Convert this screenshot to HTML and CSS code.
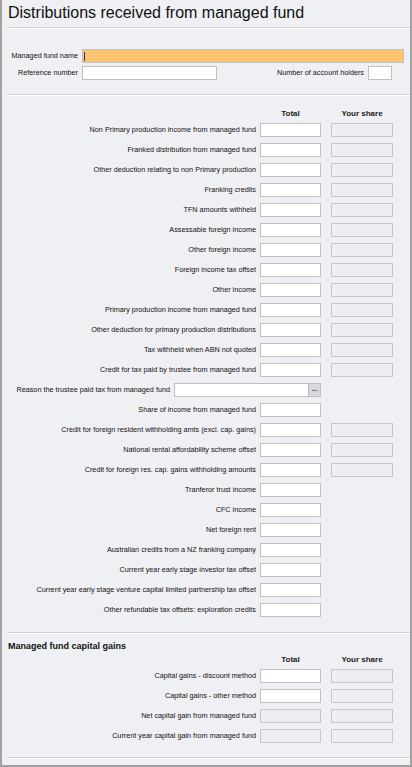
FILE: index.html
```html
<!DOCTYPE html>
<html>
<head>
<meta charset="utf-8">
<link rel="stylesheet" href="styles.css">
</head>
<body>
<div class="window">
  <h1 class="title">Distributions received from managed fund</h1>
  <div class="sep sep-title"></div>

  <div class="fund">
    <div class="fund-row">
      <span class="fund-label">Managed fund name</span>
      <div class="field field-name"><span class="caret"></span></div>
    </div>
    <div class="fund-row">
      <span class="fund-label">Reference number</span>
      <div class="field field-ref"></div>
      <span class="spacer"></span>
      <span class="holders-label">Number of account holders</span>
      <div class="field field-holders"></div>
    </div>
  </div>

  <div class="sep sep-fund"></div>

  <div class="heads heads-main">
    <span class="head-spacer"></span>
    <span class="col-head col-total">Total</span>
    <span class="col-head col-share">Your share</span>
  </div>

  <div class="rows">
    <div class="row"><span class="lbl">Non Primary production income from managed fund</span><div class="field total"></div><div class="field share"></div></div>
    <div class="row"><span class="lbl">Franked distribution from managed fund</span><div class="field total"></div><div class="field share"></div></div>
    <div class="row"><span class="lbl">Other deduction relating to non Primary production</span><div class="field total"></div><div class="field share"></div></div>
    <div class="row"><span class="lbl">Franking credits</span><div class="field total"></div><div class="field share"></div></div>
    <div class="row"><span class="lbl">TFN amounts withheld</span><div class="field total"></div><div class="field share"></div></div>
    <div class="row"><span class="lbl">Assessable foreign income</span><div class="field total"></div><div class="field share"></div></div>
    <div class="row"><span class="lbl">Other foreign income</span><div class="field total"></div><div class="field share"></div></div>
    <div class="row"><span class="lbl">Foreign income tax offset</span><div class="field total"></div><div class="field share"></div></div>
    <div class="row"><span class="lbl">Other income</span><div class="field total"></div><div class="field share"></div></div>
    <div class="row"><span class="lbl">Primary production income from managed fund</span><div class="field total"></div><div class="field share"></div></div>
    <div class="row"><span class="lbl">Other deduction for primary production distributions</span><div class="field total"></div><div class="field share"></div></div>
    <div class="row"><span class="lbl">Tax withheld when ABN not quoted</span><div class="field total"></div><div class="field share"></div></div>
    <div class="row"><span class="lbl">Credit for tax paid by trustee from managed fund</span><div class="field total"></div><div class="field share"></div></div>
    <div class="row"><span class="lbl">Reason the trustee paid tax from managed fund</span><div class="field combo"><span class="combo-btn">...</span></div><span class="share-blank"></span></div>
    <div class="row"><span class="lbl">Share of income from managed fund</span><div class="field total"></div><span class="share-blank"></span></div>
    <div class="row"><span class="lbl">Credit for foreign resident withholding amts (excl. cap. gains)</span><div class="field total"></div><div class="field share"></div></div>
    <div class="row"><span class="lbl">National rental affordability scheme offset</span><div class="field total"></div><div class="field share"></div></div>
    <div class="row"><span class="lbl">Credit for foreign res. cap. gains withholding amounts</span><div class="field total"></div><div class="field share"></div></div>
    <div class="row"><span class="lbl">Tranferor trust income</span><div class="field total"></div><span class="share-blank"></span></div>
    <div class="row"><span class="lbl">CFC income</span><div class="field total"></div><span class="share-blank"></span></div>
    <div class="row"><span class="lbl">Net foreign rent</span><div class="field total"></div><span class="share-blank"></span></div>
    <div class="row"><span class="lbl">Australian credits from a NZ franking company</span><div class="field total"></div><span class="share-blank"></span></div>
    <div class="row"><span class="lbl">Current year early stage investor tax offset</span><div class="field total"></div><span class="share-blank"></span></div>
    <div class="row"><span class="lbl">Current year early stage venture capital limited partnership tax offset</span><div class="field total"></div><span class="share-blank"></span></div>
    <div class="row"><span class="lbl">Other refundable tax offsets: exploration credits</span><div class="field total"></div><span class="share-blank"></span></div>
  </div>

  <div class="sep sep-rows"></div>

  <h2 class="section-title">Managed fund capital gains</h2>

  <div class="heads heads-cg">
    <span class="head-spacer"></span>
    <span class="col-head col-total">Total</span>
    <span class="col-head col-share">Your share</span>
  </div>

  <div class="rows">
    <div class="row"><span class="lbl">Capital gains - discount method</span><div class="field total"></div><div class="field share"></div></div>
    <div class="row"><span class="lbl">Capital gains - other method</span><div class="field total"></div><div class="field share"></div></div>
    <div class="row"><span class="lbl">Net capital gain from managed fund</span><div class="field total disabled"></div><div class="field share"></div></div>
    <div class="row"><span class="lbl">Current year capital gain from managed fund</span><div class="field total disabled"></div><div class="field share"></div></div>
  </div>

  <div class="sep sep-end"></div>
</div>
</body>
</html>
```

FILE: styles.css
```css
* {
  box-sizing: border-box;
}

html, body {
  margin: 0;
  padding: 0;
  background: #eff0f4;
}

.window {
  width: 412px;
  height: 767px;
  background: #eff0f4;
  border-left: 2px solid #a2a2a4;
  border-right: 2px solid #a2a2a4;
  border-bottom: 2px solid #a2a2a4;
  font-family: "Liberation Sans", Arial, sans-serif;
  color: #1e1e1e;
  overflow: hidden;
}

.title {
  margin: 0;
  padding: 4px 0 0 6px;
  font-size: 16px;
  line-height: 18px;
  font-weight: normal;
  color: #111;
}

.sep {
  height: 2px;
  margin-left: 5px;
  margin-right: 1px;
  border-top: 1px solid #cdced2;
  border-bottom: 1px solid #ffffff;
}

.sep-title { margin-top: 5px; }
.sep-fund { margin-top: 14px; }
.sep-rows { margin-top: 15px; }
.sep-end { margin-top: 14px; }

.field {
  height: 14px;
  background: #ffffff;
  border: 1px solid #bfc0c4;
}

.fund {
  margin-top: 20px;
  display: flex;
  flex-direction: column;
  gap: 3px;
}

.fund-row {
  display: flex;
  align-items: center;
  padding-left: 6px;
  padding-right: 6px;
}

.fund-label,
.holders-label,
.lbl {
  font-size: 7.25px;
  line-height: 14px;
  white-space: nowrap;
  color: #111;
}

.fund-label {
  width: 70px;
  text-align: right;
  margin-right: 4px;
}

.field-name {
  flex: 1;
  background: #fdc26f;
  display: flex;
  align-items: center;
}

.caret {
  width: 1px;
  height: 9px;
  margin-left: 1px;
  background: #3a3a3a;
}

.field-ref {
  width: 135px;
}

.spacer {
  flex: 1;
}

.holders-label {
  margin-right: 4px;
}

.field-holders {
  width: 24px;
  margin-right: 12px;
}

.heads {
  display: flex;
  padding-left: 6px;
  padding-right: 17px;
}

.heads-main { margin-top: 12px; margin-bottom: 3px; }
.heads-cg { margin-top: 2px; margin-bottom: 3px; }

.head-spacer {
  flex: 1;
  margin-right: 4px;
}

.col-head {
  font-size: 8px;
  line-height: 12px;
  font-weight: bold;
  text-align: center;
  color: #222;
}

.col-total { width: 61px; }
.col-share { width: 62px; margin-left: 10px; }

.rows {
  display: flex;
  flex-direction: column;
  gap: 6px;
}

.row {
  display: flex;
  align-items: center;
  padding-left: 6px;
  padding-right: 17px;
}

.lbl {
  flex: 1;
  text-align: right;
  margin-right: 4px;
}

.total {
  width: 61px;
}

.share {
  width: 62px;
  margin-left: 10px;
  background: #eeeff2;
  border-color: #c6c7cb;
}

.share-blank {
  width: 62px;
  margin-left: 10px;
  height: 14px;
}

.total.disabled {
  background: #eeeff2;
  border-color: #c6c7cb;
}

.combo {
  width: 147px;
  display: flex;
  justify-content: flex-end;
}

.combo-btn {
  width: 12px;
  height: 12px;
  background: #d9dadd;
  border-left: 1px solid #b8b9bd;
  font-size: 7px;
  line-height: 10px;
  font-weight: bold;
  text-align: center;
  color: #333;
}

.section-title {
  margin: 6px 0 0 6px;
  font-size: 9px;
  line-height: 12px;
  font-weight: bold;
  color: #111;
}
```
